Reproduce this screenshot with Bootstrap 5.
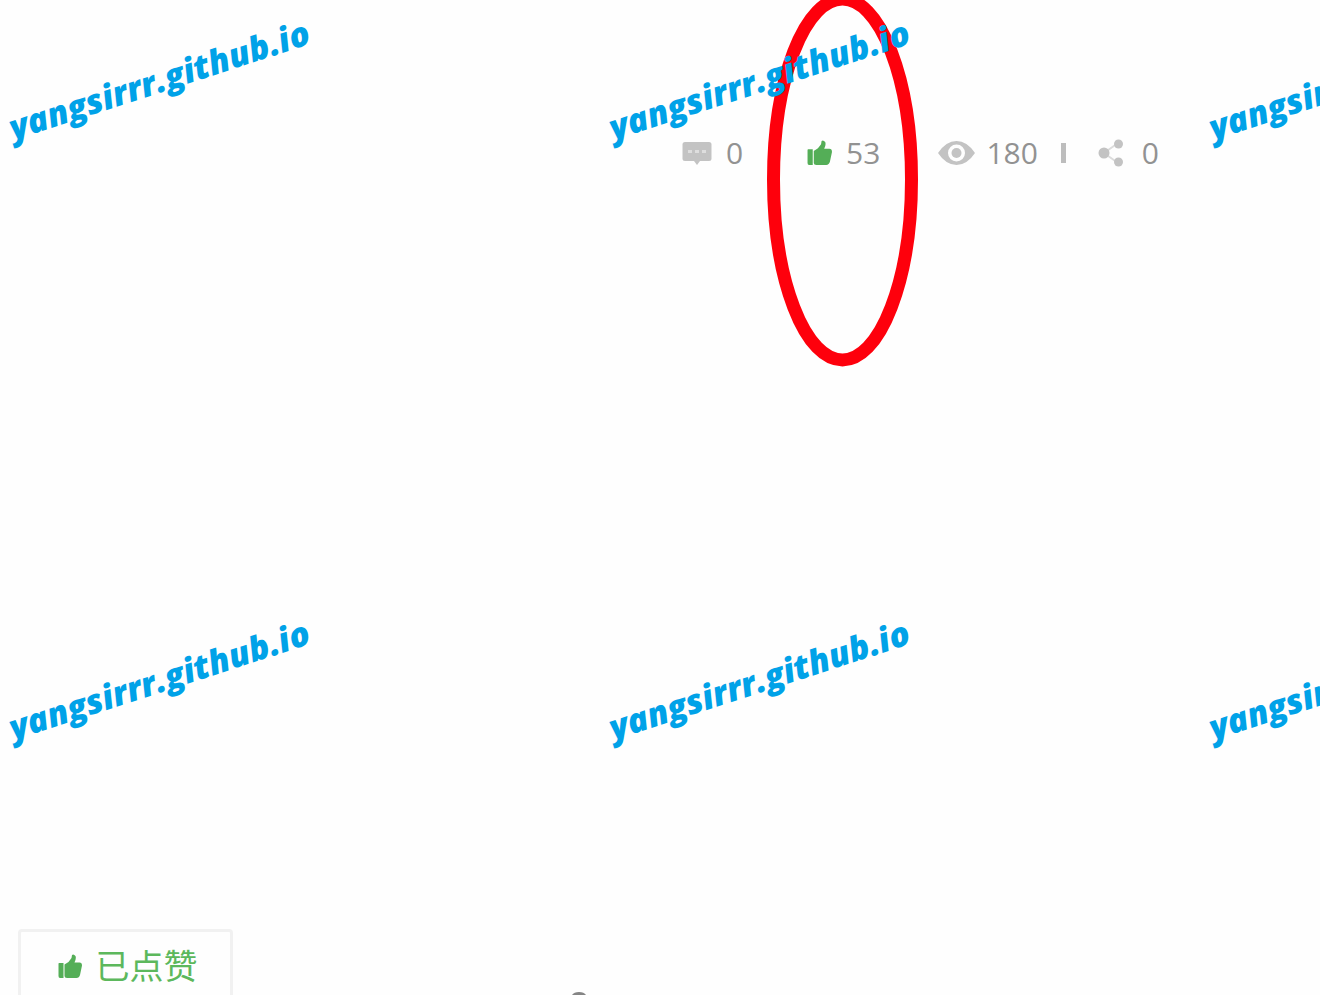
<!DOCTYPE html>
<html lang="zh-CN">
<head>
<meta charset="utf-8">
<meta name="viewport" content="width=device-width, initial-scale=1">
<title>已点赞</title>
<link href="https://cdn.jsdelivr.net/npm/bootstrap@5.3.0/dist/css/bootstrap.min.css" rel="stylesheet">
<style>
  body { background: #fff; font-family: "Open Sans", "Noto Sans CJK SC", sans-serif; }
  .stage { height: calc(100vh - 9px); background: #fefefe; }
  .stats { padding: 132px 161px 0 0; font-size: 30px; line-height: 42px; }
  .stats a { color: #929292; gap: 14px; }
  .stats svg { fill: #c3c3c3; }
  .stats .liked svg, .like-btn svg { fill: #54ae57; }
  .sep { width: 5px; height: 20px; background: #bdbdbd; }
  .to-like { margin-left: 64px; }
  .stats .to-view { margin-left: 58px; gap: 11px; }
  .to-sep { margin-left: 23px; }
  .stats .to-share { margin-left: 32px; gap: 18px; }
  .ring { top: -8px; left: 767px; width: 151px; height: 375px; }
  .footer-row { padding-left: 18px; height: 66px; }
  .like-btn { width: 215px; height: 84px; padding: 0 0 10px 4px; gap: 14px; border: 3px solid #f1f1f1; border-radius: 4px; background: #fefefe; color: #5cb85c; font-size: 34px; line-height: 48px; }
  .speck { margin-left: 338px; margin-top: 63px; }
  .tiles { width: 1800px; }
  .tile { width: 600px; height: 600px; padding: 52px 0 0 2px; }
  .tile span { display: block; width: 316px; white-space: nowrap; transform: rotate(-18deg); color: #00a2e8; font: italic 800 34px/54px "Open Sans", sans-serif; }
</style>
<script src="https://cdn.jsdelivr.net/npm/bootstrap@5.3.0/dist/js/bootstrap.bundle.min.js"></script>
</head>
<body>
<svg class="d-none" aria-hidden="true">
  <symbol id="thumb" viewBox="0 0 24 25">
    <path d="M1 9h4.500v15H2q-1.500 0-1.500-2V10Q.5 9 1 9zM6.500 10.500l4-2.500 3-4 .5-3q1.500-1.500 3.500 1 1 2.500-1 6.500h5q2.500 0 2.500 3l-2 9.500q-.8 3-3.500 3H9q-2.500 0-2.500-2z"/>
  </symbol>
</svg>
<main class="stage position-relative overflow-hidden d-flex flex-column justify-content-between">
  <nav class="stats d-flex align-items-center justify-content-end">
    <a href="#comments" class="d-flex align-items-center text-decoration-none">
      <svg width="30" height="24" viewBox="0 0 30 24" aria-hidden="true"><path d="M3 1h24q2.500 0 2.500 2.500v14Q29.500 20 27 20h-9l-3 4-3-4H3Q.5 20 .5 17.500v-14Q.5 1 3 1z"/><path fill="#dedede" d="M6 9h4v3H6zm7 0h4v3h-4zm7 0h4v3h-4z"/></svg>
      <span>0</span>
    </a>
    <a href="#like" class="liked to-like d-flex align-items-center text-decoration-none">
      <svg width="25" height="26" aria-hidden="true"><use href="#thumb"/></svg>
      <span>53</span>
    </a>
    <a href="#views" class="to-view d-flex align-items-center text-decoration-none">
      <svg width="37" height="26" viewBox="0 0 37 26" aria-hidden="true"><path fill-rule="evenodd" d="M0 13Q8 1 18.500 1T37 13Q29 25 18.500 25T0 13zm18.500-8.500a8.500 8.500 0 1 0 0 17 8.500 8.500 0 1 0 0-17z"/><circle cx="18.500" cy="13" r="5"/></svg>
      <span>180</span>
    </a>
    <div class="sep to-sep"></div>
    <a href="#share" class="to-share d-flex align-items-center text-decoration-none">
      <svg width="26" height="28" viewBox="0 0 26 28" aria-hidden="true"><path d="M6 14L20 4M6 14l14 10" stroke="#dcdcdc" stroke-width="2"/><circle cx="6" cy="14" r="5.500"/><circle cx="20.500" cy="5" r="4.500"/><circle cx="20.500" cy="23" r="4.500"/></svg>
      <span>0</span>
    </a>
  </nav>
  <div class="footer-row d-flex align-items-start">
    <button type="button" class="like-btn d-flex align-items-center justify-content-center flex-shrink-0">
      <svg width="24" height="25" aria-hidden="true"><use href="#thumb"/></svg>
      <span>已点赞</span>
    </button>
    <svg class="speck flex-shrink-0" width="16" height="3" viewBox="0 0 16 3" aria-hidden="true"><path d="M1 3Q3 0 8 0t7 3z" fill="#858585"/></svg>
  </div>
  <svg class="ring position-absolute" viewBox="0 0 151 375" aria-hidden="true"><ellipse cx="75.500" cy="187.500" rx="69" ry="180.500" fill="none" stroke="#fe000c" stroke-width="13"/></svg>
  <div class="tiles position-absolute top-0 start-0 d-flex flex-wrap pe-none">
    <div class="tile"><span>yangsirrr.github.io</span></div>
    <div class="tile"><span>yangsirrr.github.io</span></div>
    <div class="tile"><span>yangsirrr.github.io</span></div>
    <div class="tile"><span>yangsirrr.github.io</span></div>
    <div class="tile"><span>yangsirrr.github.io</span></div>
    <div class="tile"><span>yangsirrr.github.io</span></div>
  </div>
</main>
</body>
</html>
